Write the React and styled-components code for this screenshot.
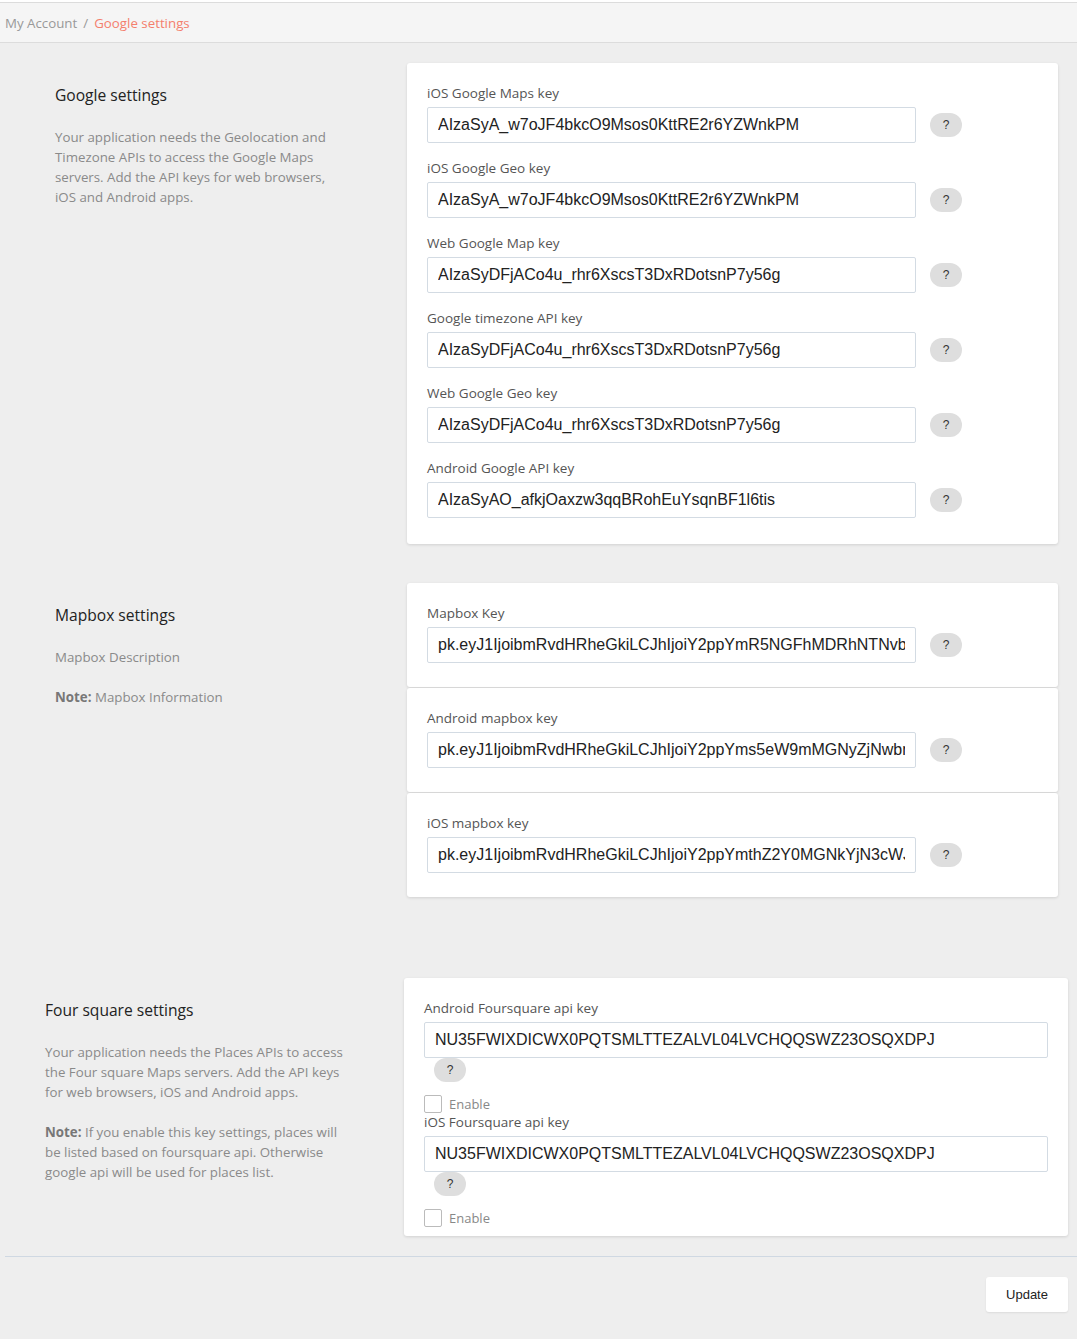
import React from "react"
import styled, {createGlobalStyle} from "styled-components"

// settings page for map / places api keys

const GlobalStyle = createGlobalStyle`
    body {
        margin: 0;
        background: #fff;
        font-family: "Open Sans", "Noto Sans", Arial, sans-serif;
    }
`

const google = [
    {label: "iOS Google Maps key", value: "AIzaSyA_w7oJF4bkcO9Msos0KttRE2r6YZWnkPM"},
    {label: "iOS Google Geo key", value: "AIzaSyA_w7oJF4bkcO9Msos0KttRE2r6YZWnkPM"},
    {label: "Web Google Map key", value: "AIzaSyDFjACo4u_rhr6XscsT3DxRDotsnP7y56g"},
    {label: "Google timezone API key", value: "AIzaSyDFjACo4u_rhr6XscsT3DxRDotsnP7y56g"},
    {label: "Web Google Geo key", value: "AIzaSyDFjACo4u_rhr6XscsT3DxRDotsnP7y56g"},
    {label: "Android Google API key", value: "AIzaSyAO_afkjOaxzw3qqBRohEuYsqnBF1l6tis"},
]

const mapbox = [
    {label: "Mapbox Key", value: "pk.eyJ1IjoibmRvdHRheGkiLCJhIjoiY2ppYmR5NGFhMDRhNTNvbXZ4"},
    {label: "Android mapbox key", value: "pk.eyJ1IjoibmRvdHRheGkiLCJhIjoiY2ppYms5eW9mMGNyZjNwbmQ4"},
    {label: "iOS mapbox key", value: "pk.eyJ1IjoibmRvdHRheGkiLCJhIjoiY2ppYmthZ2Y0MGNkYjN3cWJ3"},
]

const foursquare = [
    {label: "Android Foursquare api key", value: "NU35FWIXDICWX0PQTSMLTTEZALVL04LVCHQQSWZ23OSQXDPJ"},
    {label: "iOS Foursquare api key", value: "NU35FWIXDICWX0PQTSMLTTEZALVL04LVCHQQSWZ23OSQXDPJ"},
]

export default function App() {
    return (
        <>
            <GlobalStyle/>
            <Header>
                <Crumb>My Account</Crumb>
                <Slash>/</Slash>
                <Crumb active>Google settings</Crumb>
            </Header>
            <Main>
                <Section indent={55} side={352} right={19}>
                    <Side>
                        <Title>Google settings</Title>
                        <Text width={285}>
                            Your application needs the Geolocation and Timezone APIs to access the Google Maps
                            servers. Add the API keys for web browsers, iOS and Android apps.
                        </Text>
                    </Side>
                    <Card>
                        {google.map((f, i) => (
                            <Field key={i}>
                                <Label>{f.label}</Label>
                                <Row>
                                    <Input defaultValue={f.value} width={489}/>
                                    <Help>?</Help>
                                </Row>
                            </Field>
                        ))}
                    </Card>
                </Section>

                <Section indent={55} side={352} right={19} top={39}>
                    <Side>
                        <Title>Mapbox settings</Title>
                        <Text width={285}>Mapbox Description</Text>
                        <Text width={285}><b>Note:</b> Mapbox Information</Text>
                    </Side>
                    <Stack>
                        {mapbox.map((f, i) => (
                            <SmallCard key={i}>
                                <Label>{f.label}</Label>
                                <Row>
                                    <Input defaultValue={f.value} width={489}/>
                                    <Help>?</Help>
                                </Row>
                            </SmallCard>
                        ))}
                    </Stack>
                </Section>

                <Section indent={45} side={359} right={9} top={81}>
                    <Side>
                        <Title>Four square settings</Title>
                        <Text width={305}>
                            Your application needs the Places APIs to access the Four square Maps servers. Add
                            the API keys for web browsers, iOS and Android apps.
                        </Text>
                        <Text width={305}>
                            <b>Note:</b> If you enable this key settings, places will be listed based on
                            foursquare api. Otherwise google api will be used for places list.
                        </Text>
                    </Side>
                    <WideCard>
                        {foursquare.map((f, i) => (
                            <div key={i}>
                                <Label>{f.label}</Label>
                                <Input defaultValue={f.value}/>
                                <Help under>?</Help>
                                <Check>
                                    <Box/>
                                    Enable
                                </Check>
                            </div>
                        ))}
                    </WideCard>
                </Section>

                <Footer>
                    <Button>Update</Button>
                </Footer>
            </Main>
        </>
    )
}

const Header = styled.div`
    margin-top: 2px;
    height: 39px;
    border-top: 1px solid #dcdcdc;
    border-bottom: 1px solid #dcdcdc;
    background: #f5f5f5;
    display: flex;
    align-items: center;
    padding-left: 5px;
    font-size: 13.3px;
`

const Crumb = styled.span`
    color: ${props => props.active ? "#f47f6d" : "#999"};
`

const Slash = styled.span`
    color: #999;
    margin: 0 6px;
`

const Main = styled.div`
    background: #eeeeee;
    padding-top: 20px;
    min-height: 1276px;
    box-sizing: border-box;
`

const Section = styled.div`
    display: grid;
    grid-template-columns: ${props => props.side}px 1fr;
    padding-left: ${props => props.indent}px;
    padding-right: ${props => props.right}px;
    margin-top: ${props => props.top || 0}px;
`

const Side = styled.div`
    padding-top: 22px;
`

const Title = styled.div`
    font-size: 15.6px;
    line-height: 20px;
    color: #222;
    margin-bottom: 22px;
`

const Text = styled.p`
    margin: 0 0 20px;
    width: ${props => props.width}px;
    font-size: 13.3px;
    line-height: 20px;
    color: #8a8a8a;
    b {
        color: #777;
    }
`

const Card = styled.div`
    background: #fff;
    border-radius: 3px;
    box-shadow: 0 1px 3px rgba(0, 0, 0, 0.12);
    padding: 21px 20px 26px;
`

const Stack = styled.div`
    display: flex;
    flex-direction: column;
    gap: 1px;
`

const SmallCard = styled(Card)`
    padding: 21px 20px 24px;
    height: 104px;
    box-sizing: border-box;
`

const WideCard = styled(Card)`
    padding: 21px 20px 9px;
`

const Field = styled.div`
    margin-bottom: 16px;
    &:last-child {
        margin-bottom: 0;
    }
`

const Label = styled.div`
    font-size: 13.5px;
    line-height: 18px;
    color: #555;
    margin-bottom: 5px;
`

const Row = styled.div`
    display: flex;
    align-items: center;
    gap: 14px;
`

const Input = styled.input`
    box-sizing: border-box;
    width: ${props => props.width ? props.width + "px" : "100%"};
    height: 36px;
    border: 1px solid #d3dbe3;
    border-radius: 2px;
    padding: 0 10px;
    font-family: "Liberation Sans", Arial, sans-serif;
    font-size: 16px;
    color: #222;
    background: #fff;
    outline: none;
    display: block;
`

const Help = styled.span`
    display: flex;
    align-items: center;
    justify-content: center;
    flex: none;
    width: 32px;
    height: 24px;
    border-radius: 12px;
    background: #dedede;
    font-family: "Liberation Sans", Arial, sans-serif;
    font-size: 12px;
    color: #333;
    margin-left: ${props => props.under ? "10px" : "0"};
`

const Check = styled.label`
    display: flex;
    align-items: center;
    gap: 7px;
    margin-top: 13px;
    height: 18px;
    font-size: 13px;
    line-height: 18px;
    color: #888;
`

const Box = styled.span`
    width: 16px;
    height: 16px;
    border: 1px solid #bbb;
    border-radius: 2px;
    background: #fff;
`

const Footer = styled.div`
    margin: 20px 0 0 5px;
    border-top: 1px solid #cfd8e2;
    padding: 20px 9px 27px 0;
    display: flex;
    justify-content: flex-end;
`

const Button = styled.button`
    width: 82px;
    height: 35px;
    background: #fff;
    border: none;
    border-radius: 3px;
    box-shadow: 0 1px 2px rgba(0, 0, 0, 0.08);
    font-family: "Liberation Sans", Arial, sans-serif;
    font-size: 13px;
    color: #222;
`
